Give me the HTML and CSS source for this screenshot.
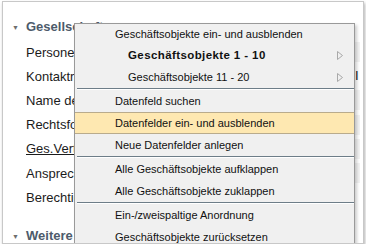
FILE: index.html
```html
<!DOCTYPE html>
<html lang="de">
<head>
  <meta charset="UTF-8" />
  <title>Geschäftsobjekte</title>
  <link rel="stylesheet" href="styles.css">
</head>
<body>
  <div class="panel">
    <div class="group-head"><span class="caret">&#9660;</span>Gesellschaft</div>

    <div class="row"><span class="label">Personen</span><span class="field"></span></div>
    <div class="row"><span class="label">Kontaktrolle</span><span class="field plain">I</span></div>
    <div class="row"><span class="label">Name der Gesellschaft</span><span class="field"></span></div>
    <div class="row"><span class="label">Rechtsform</span><span class="field"></span></div>
    <div class="row"><span class="label link">Ges.Vertreter</span><span class="field"></span></div>
    <div class="row"><span class="label">Ansprechpartner</span><span class="field"></span></div>
    <div class="row"><span class="label">Berechtigte</span><span class="field plain"></span></div>

    <div class="group-head last"><span class="caret">&#9660;</span>Weitere Angaben</div>

    <!-- context menu over the form -->
    <div class="menu">
      <div class="item first">Geschäftsobjekte ein- und ausblenden</div>
      <div class="item sub bold">Geschäftsobjekte 1 - 10
        <svg class="arrow" width="6" height="9" viewBox="0 0 6 9"><path d="M0.5 0.5 L5.5 4.5 L0.5 8.5 Z" fill="none" stroke="#a9a9a9"/></svg>
      </div>
      <div class="item sub">Geschäftsobjekte 11 - 20
        <svg class="arrow" width="6" height="9" viewBox="0 0 6 9"><path d="M0.5 0.5 L5.5 4.5 L0.5 8.5 Z" fill="none" stroke="#a9a9a9"/></svg>
      </div>
      <div class="sep"></div>
      <div class="item">Datenfeld suchen</div>
      <div class="item active">Datenfelder ein- und ausblenden</div>
      <div class="item">Neue Datenfelder anlegen</div>
      <div class="sep"></div>
      <div class="item">Alle Geschäftsobjekte aufklappen</div>
      <div class="item">Alle Geschäftsobjekte zuklappen</div>
      <div class="sep"></div>
      <div class="item">Ein-/zweispaltige Anordnung</div>
      <div class="item">Geschäftsobjekte zurücksetzen</div>
    </div>
  </div>
</body>
</html>
```

FILE: styles.css
```css
* {
  box-sizing: border-box;
}
body {
  margin: 0;
  background: #fff;
  font-family: 'Liberation Sans', Arial, sans-serif;
  color: #1b1b1b;
}
.panel {
  position: relative;
  overflow: hidden;
  margin: 1px 0 0 2px;
  width: 362px;
  height: 243px;
  padding-top: 15px;
  background: #fff;
  border: 1px solid #c8c8c8;
  box-shadow: 1px 2px 3px rgba(0, 0, 0, 0.3);
}
.group-head {
  height: 20px;
  line-height: 20px;
  padding-left: 23px;
  font-size: 13px;
  font-weight: bold;
  color: #4d5b6b;
  position: relative;
}
.group-head.last {
  margin-top: 17px;
}
.caret {
  position: absolute;
  left: 9px;
  top: 1px;
  font-size: 7px;
  color: #6e6e6e;
}
.row {
  display: flex;
  align-items: center;
  justify-content: space-between;
  height: 24.2px;
  padding: 0 3px 0 23px;
  font-size: 13px;
}
.group-head + .row {
  margin-top: 3px;
}
.label {
  white-space: nowrap;
}
.link {
  text-decoration: underline;
}
.field {
  flex: none;
  width: 160px;
  height: 20px;
  background: #f3f3f3;
  font-size: 13px;
  line-height: 20px;
  padding-left: 155px;
}
.field.plain {
  background: none;
}

/* context menu */
.menu {
  position: absolute;
  left: 71px;
  top: 21px;
  width: 281px;
  height: 240px;
  background: #f0f0f0;
  border: 1px solid #999;
  box-shadow: 2px 2px 3px rgba(0, 0, 0, 0.2);
  font-size: 11px;
  color: #111;
}
.item {
  position: relative;
  height: 22px;
  line-height: 22px;
  padding-left: 40px;
  white-space: nowrap;
}
.item.first {
  height: 20px;
  line-height: 20px;
}
.item.sub {
  padding-left: 53px;
}
.item.bold {
  font-weight: bold;
  font-size: 11.5px;
  letter-spacing: 0.4px;
}
.item.active {
  background: #fee8b1;
  border-top: 1px solid #b9ab8c;
  border-bottom: 1px solid #b9ab8c;
  line-height: 20px;
}
.arrow {
  position: absolute;
  left: 262px;
  top: 7px;
}
.sep {
  margin-left: 2px;
  height: 2px;
  border-top: 1px solid #6d7d88;
  border-bottom: 1px solid #fff;
}
```
